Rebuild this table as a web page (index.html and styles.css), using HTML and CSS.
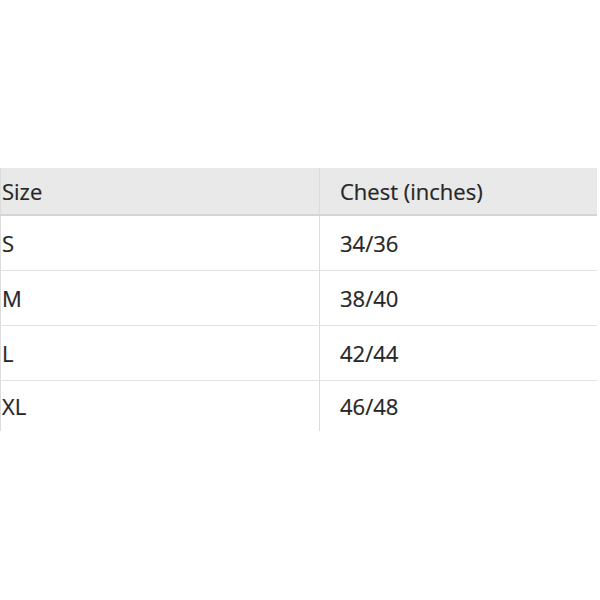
FILE: index.html
```html
<!DOCTYPE html>
<html>
<head>
<meta charset="utf-8">
<link rel="stylesheet" href="styles.css">
</head>
<body>
<div class="wrap">
  <table class="size-table">
    <thead>
      <tr><th class="c1">Size</th><th class="c2">Chest (inches)</th></tr>
    </thead>
    <tbody>
      <tr><td class="c1">S</td><td class="c2">34/36</td></tr>
      <tr><td class="c1">M</td><td class="c2">38/40</td></tr>
      <tr><td class="c1">L</td><td class="c2">42/44</td></tr>
      <tr class="last"><td class="c1">XL</td><td class="c2">46/48</td></tr>
    </tbody>
  </table>
</div>
</body>
</html>
```
FILE: styles.css
```css
html, body {
  margin: 0;
  padding: 0;
  background: #fff;
}
.wrap {
  padding-top: 168px;
  width: 597px;
}
.size-table {
  width: 597px;
  border-collapse: collapse;
  font-family: "Open Sans", sans-serif;
  font-size: 22px;
  color: #262626;
  border-left: 1px solid #dcdcdc;
}
.size-table th {
  font-weight: normal;
  text-align: left;
  background: #e9e9e9;
  height: 46px;
  border-bottom: 2px solid #d4d4d4;
  -webkit-text-stroke: 0.2px #262626;
}
.size-table td {
  height: 54px;
  border-bottom: 1px solid #e2e2e2;
  -webkit-text-stroke: 0.2px #262626;
}
.size-table tr.last td {
  border-bottom: none;
  height: 50px;
}
.c1 {
  width: 317px;
  padding: 0 0 0 1px;
  border-right: 1px solid #dcdcdc;
}
.c2 {
  padding: 0 0 0 20px;
}
```
